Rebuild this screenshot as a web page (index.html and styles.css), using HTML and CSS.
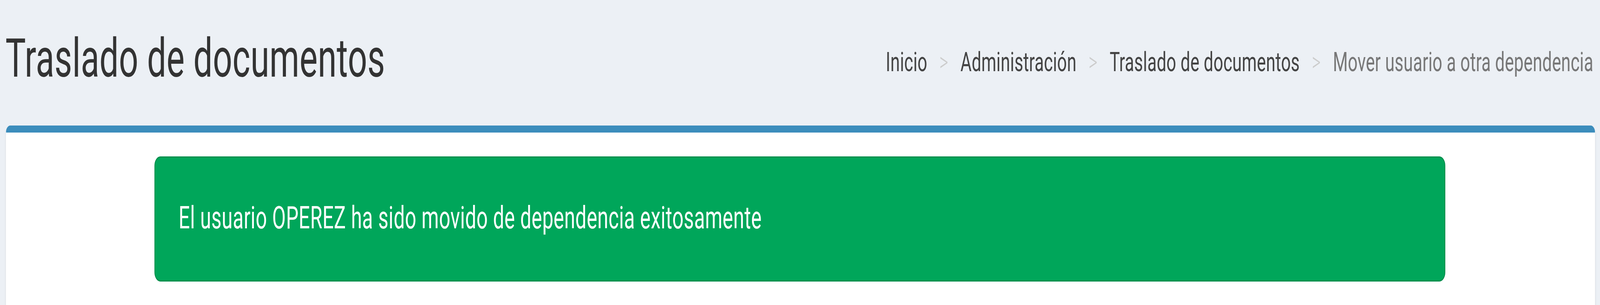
FILE: index.html
```html
<!DOCTYPE html>
<html lang="es">
<head>
<meta charset="utf-8">
<title>Traslado de documentos</title>
<link rel="stylesheet" href="styles.css">
</head>
<body>
<div class="viewport">
  <div class="page">
    <div class="content-wrapper">
      <section class="content-header">
        <h1 class="page-title">Traslado de documentos</h1>
        <ol class="breadcrumb">
          <li><a href="#">Inicio</a></li>
          <li><a href="#">Administración</a></li>
          <li><a href="#">Traslado de documentos</a></li>
          <li class="active">Mover usuario a otra dependencia</li>
        </ol>
      </section>
      <section class="content">
        <div class="box box-primary">
          <div class="box-body">
            <div class="alert alert-success">El usuario OPEREZ ha sido movido de dependencia exitosamente</div>
          </div>
        </div>
      </section>
    </div>
  </div>
</div>
</body>
</html>
```
FILE: styles.css
```css
html, body {
  margin: 0;
  padding: 0;
  height: 100%;
  overflow: hidden;
  background: #ecf0f5;
}
body {
  font-family: Roboto, "Liberation Sans", Arial, sans-serif;
  color: #333;
}
.viewport {
  width: 100%;
  height: 100%;
  overflow: hidden;
}
/* The layout is drawn on a 6475px-wide canvas and fitted to the window width */
.page {
  width: 6475px;
  transform-origin: 0 0;
  transform: scaleX(0.6326);
  transform: scaleX(tan(atan2(100vw, 6475px)));
}
.content-wrapper {
  background: #ecf0f5;
  min-height: 780px;
}
.content-header {
  display: flex;
  justify-content: space-between;
  align-items: flex-start;
  padding: 73px 27px 96px 22px;
}
.page-title {
  margin: 0;
  font-size: 138px;
  line-height: 152px;
  font-weight: 400;
  letter-spacing: 0.7px;
  color: #333;
  white-space: nowrap;
}
.breadcrumb {
  display: flex;
  list-style: none;
  margin: 46px 0 0 0;
  padding: 0;
  font-size: 69px;
  line-height: 80px;
  letter-spacing: 0.4px;
  white-space: nowrap;
}
.breadcrumb li {
  display: flex;
}
.breadcrumb li + li::before {
  content: ">";
  display: inline-block;
  width: 134px;
  text-align: center;
  color: #ccc;
  font-weight: 300;
}
.breadcrumb a {
  color: #444;
  text-decoration: none;
}
.breadcrumb .active {
  color: #777;
}
.content {
  padding: 0 20px 0 24px;
}
.box {
  background: #fff;
  border-top: 18px solid #3c8dbc;
  border-radius: 18px 18px 0 0;
  box-shadow: 0 6px 6px rgba(0, 0, 0, 0.1);
  min-height: 480px;
}
.box-body {
  padding: 61px 606px 0 601px;
}
.alert {
  background: #00a65a;
  border: 3px solid #008d4c;
  border-radius: 24px;
  color: #fff;
  font-size: 80px;
  line-height: 114px;
  letter-spacing: 0.8px;
  padding: 97px 95px 103px;
  white-space: nowrap;
}
```
